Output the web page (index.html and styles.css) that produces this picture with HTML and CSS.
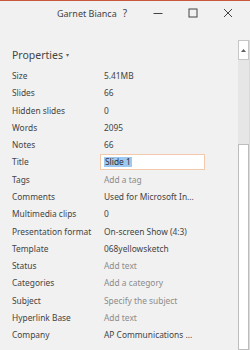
FILE: index.html
```html
<!DOCTYPE html>
<html>
<head>
<meta charset="utf-8">
<link rel="stylesheet" href="styles.css">
</head>
<body>
<div class="window">
  <div class="topline"></div>
  <div class="titlebar">
    <span class="user">Garnet Bianca</span>
    <span class="help">?</span>
    <span class="ctl ctl-min"><svg width="10" height="10" viewBox="0 0 10 10"><path d="M0.5 5.5H9.5" stroke="#444" stroke-width="1"/></svg></span>
    <span class="ctl ctl-max"><svg width="10" height="10" viewBox="0 0 10 10"><rect x="1" y="1" width="8" height="8" fill="none" stroke="#444" stroke-width="1"/></svg></span>
    <span class="ctl ctl-close"><svg width="10" height="10" viewBox="0 0 10 10"><path d="M1 1L9 9M9 1L1 9" stroke="#444" stroke-width="1"/></svg></span>
  </div>
  <div class="main">
    <div class="content">
      <div class="heading">Properties <span class="caret">&#9662;</span></div>
      <div class="rows">
        <div class="row"><span class="lbl">Size</span><span class="val">5.41MB</span></div>
        <div class="row"><span class="lbl">Slides</span><span class="val">66</span></div>
        <div class="row"><span class="lbl">Hidden slides</span><span class="val">0</span></div>
        <div class="row"><span class="lbl">Words</span><span class="val">2095</span></div>
        <div class="row"><span class="lbl">Notes</span><span class="val">66</span></div>
        <div class="row"><span class="lbl">Title</span><span class="input"><span class="sel">Slide 1</span></span></div>
        <div class="row"><span class="lbl">Tags</span><span class="val hint">Add a tag</span></div>
        <div class="row"><span class="lbl">Comments</span><span class="val">Used for Microsoft In...</span></div>
        <div class="row"><span class="lbl">Multimedia clips</span><span class="val">0</span></div>
        <div class="row"><span class="lbl">Presentation format</span><span class="val">On-screen Show (4:3)</span></div>
        <div class="row"><span class="lbl">Template</span><span class="val">068yellowsketch</span></div>
        <div class="row"><span class="lbl">Status</span><span class="val hint">Add text</span></div>
        <div class="row"><span class="lbl">Categories</span><span class="val hint">Add a category</span></div>
        <div class="row"><span class="lbl">Subject</span><span class="val hint">Specify the subject</span></div>
        <div class="row"><span class="lbl">Hyperlink Base</span><span class="val hint">Add text</span></div>
        <div class="row"><span class="lbl">Company</span><span class="val">AP Communications ...</span></div>
      </div>
    </div>
    <div class="scrollbar">
      <div class="up"><svg width="5" height="3" viewBox="0 0 5 3"><path d="M0 3L2.5 0L5 3Z" fill="#606060"/></svg></div>
      <div class="track"></div>
      <div class="thumb"></div>
    </div>
    <div class="edge"></div>
  </div>
</div>
</body>
</html>
```
FILE: styles.css
```css
* { box-sizing: border-box; }
html, body { margin: 0; padding: 0; }
body {
  width: 250px;
  height: 350px;
  overflow: hidden;
  background: #f1f1f1;
  font-family: "Noto Sans", "Open Sans", sans-serif;
  color: #444;
}
.window { display: flex; flex-direction: column; height: 350px; }
.topline { height: 1px; background: #c9573b; }
.titlebar {
  height: 24px;
  display: flex;
  align-items: center;
  font-size: 9px;
  color: #444;
}
.user { margin-left: 57px; width: 70px; }
.help { width: 14px; font-size: 10px; }
.ctl { display: flex; justify-content: center; align-items: center; flex: none; }
.ctl-min { width: 44px; }
.ctl-max { width: 26px; }
.ctl-close { width: 44px; }
.main { flex: 1; display: flex; margin-top: 15px; }
.content { flex: 1; }
.heading {
  font-size: 10.5px;
  color: #444;
  padding-left: 12px;
  height: 22px;
  padding-top: 9px;
  line-height: 13px;
}
.caret { font-size: 6px; color: #666; vertical-align: 2px; }
.rows { display: flex; flex-direction: column; padding-top: 5px; }
.row {
  display: flex;
  align-items: center;
  height: 17.27px;
  font-size: 8.4px;
}
.lbl { width: 104px; padding-left: 12px; color: #444; flex: none; }
.val { color: #444; white-space: nowrap; }
.hint { color: #8c8c8c; }
.input {
  margin-left: -4px;
  width: 105px;
  height: 16px;
  background: #fff;
  border: 1px solid #f3c9ab;
  display: flex;
  align-items: center;
  padding-left: 3px;
}
.sel { background: #9dc8ef; color: #333; line-height: 10px; padding: 0 1px; }
.scrollbar { width: 11px; display: flex; flex-direction: column; }
.up {
  height: 20px;
  border: 1px solid #c6c6c6;
  background: #fff;
  display: flex;
  justify-content: center;
  align-items: center;
}
.track { height: 84px; background: #e6e6e6; }
.thumb { flex: 1; background: #fff; border: 1px solid #bdbdbd; }
.edge { width: 1px; background: #d9d9d9; }
```
